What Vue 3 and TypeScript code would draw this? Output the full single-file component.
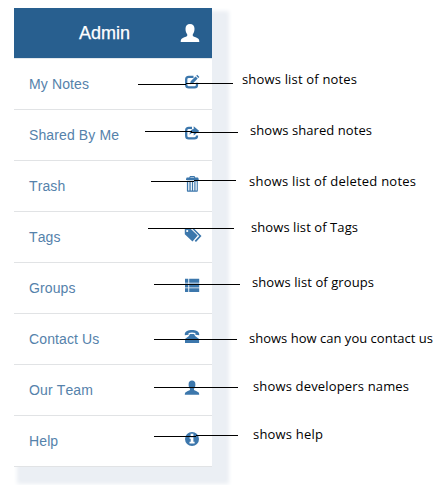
<script setup lang="ts">
type IconName = 'edit' | 'share' | 'trash' | 'tags' | 'list' | 'phone' | 'user' | 'info'

interface MenuItem {
  label: string
  icon: IconName
}

interface Callout {
  text: string
  x: number
  y: number
  width: number
  line: string
}

const items: MenuItem[] = [
  { label: 'My Notes', icon: 'edit' },
  { label: 'Shared By Me', icon: 'share' },
  { label: 'Trash', icon: 'trash' },
  { label: 'Tags', icon: 'tags' },
  { label: 'Groups', icon: 'list' },
  { label: 'Contact Us', icon: 'phone' },
  { label: 'Our Team', icon: 'user' },
  { label: 'Help', icon: 'info' },
]

const callouts: Callout[] = [
  { text: 'shows list of notes', x: 242, y: 84, width: 115, line: 'M138 84h48v-1h47v1h-47v1h-48z' },
  { text: 'shows shared notes', x: 250, y: 135, width: 122, line: 'M145 131h47v1h46v1h-47v-1h-46z' },
  { text: 'shows list of deleted notes', x: 249, y: 186, width: 167, line: 'M151 181h43v-1h42v1h-42v1h-43z' },
  { text: 'shows list of Tags', x: 251, y: 232, width: 107, line: 'M148 228h86v1h-86z' },
  { text: 'shows list of groups', x: 252, y: 287, width: 122, line: 'M154 284h86v1h-86z' },
  { text: 'shows how can you contact us', x: 249, y: 343, width: 184, line: 'M154 339h83v1h-83z' },
  { text: 'shows developers names', x: 253, y: 391, width: 156, line: 'M154 387h84v1h-84z' },
  { text: 'shows help', x: 253, y: 439, width: 70, line: 'M154 436h42v-1h42v1h-42v1h-42z' },
]
</script>

<template>
  <main class="page">
    <nav class="panel">
      <header class="head">
        <span class="title">Admin</span>
        <svg class="avatar" viewBox="0 0 20 19">
          <path d="M5.500 4.800C5.500 1.600 7.200 0 10 0s4.500 1.600 4.500 4.800c0 2.500-.7 4.300-1.700 5.500v1.800c1.400.9 4.400 1.600 5.500 2.700.7.700 1 1.500 1 3.200H.700c0-1.700.3-2.500 1-3.200 1.100-1.100 4.100-1.800 5.500-2.700v-1.800C6.200 9.100 5.500 7.300 5.500 4.800z" />
        </svg>
      </header>
      <a v-for="item in items" :key="item.label" class="row">
        <span>{{ item.label }}</span>
        <svg class="icon" viewBox="0 0 16 16">
          <g v-if="item.icon === 'edit'">
            <path class="stroke" d="M9.500 2.800H4.800Q2.200 2.800 2.200 5.300v5.400Q2.200 13.400 4.800 13.400h5.700Q13 13.400 13 11V8.800" />
            <path d="M6 10.200 6.700 7.200 11.500 2.400l2.200 2.200L8.900 9.400zM12.200 1.800l1-1 2.200 2.100-1.100 1.200z" />
          </g>
          <g v-else-if="item.icon === 'share'">
            <path class="stroke" d="M8 2.800H4.800Q2.200 2.800 2.200 5.300v5.400Q2.200 13.400 4.800 13.400h5.500Q13 13.400 13 11v-.6" />
            <path d="M9.700 1.300 15.300 5.900l-5.600 4.500V7.900Q7.300 7.600 5.500 9.800 5.700 4.600 9.700 4z" />
          </g>
          <g v-else-if="item.icon === 'trash'">
            <path d="M6 0h4.500l.8 1.500H14l.7 1.500v1H2V3l.7-1.500h2.500zM6.500.9l-.3.600h4L9.900.9z" />
            <path fill-rule="evenodd" d="M2.900 4.700h10.900V15Q13.800 15.800 13 15.800H3.700Q2.900 15.800 2.900 15zM4.200 5.600v9h1.200v-9zM6.700 5.600v9h1.200v-9zM9.100 5.600v9h1.200v-9zM11.500 5.600v9h1.200v-9z" />
          </g>
          <g v-else-if="item.icon === 'tags'">
            <path fill-rule="evenodd" d="M.8 1.300h5.300l7.600 7.300-5.200 6L.8 7.300zM3.200 2.900a1.100 1.100 0 1 0 0 2.200A1.100 1.100 0 0 0 3.200 2.900z" />
            <path d="M8 1.500h2l7.500 7.500-5.500 6-1.300-1.200 4.500-4.700z" />
          </g>
          <g v-else-if="item.icon === 'list'">
            <path d="M1 .8h3.300v3.900H1zM5.200.8H15.200v3.900h-10zM1 5.500h3.300v3.900H1zM5.200 5.500h10v3.900h-10zM1 10.200h3.300v3.900H1zM5.200 10.200h10v3.900h-10z" />
          </g>
          <g v-else-if="item.icon === 'phone'">
            <path d="M.8 5C1.100 2.300 4.300 1 8 1s6.900 1.300 7.200 4v1.300l-3.800-.5V4C9.600 3.200 6.400 3.200 4.600 4v1.800L.8 6.300zM5.900 4.900h4.200l1 2 4 3.100v4H1v-4l3.900-3.100z" />
          </g>
          <g v-else-if="item.icon === 'user'">
            <path d="M4.600 4.300C4.600 1.800 5.900.600 8 .600s3.400 1.200 3.400 3.700c0 2-.5 3.600-1.400 4.500v1.200c1 .8 3.400 1.300 4.400 2.300.6.600.8 1.300.8 2.400H.8c0-1.100.2-1.800.8-2.400 1-1 3.400-1.500 4.400-2.300V8.800c-.9-.9-1.400-2.500-1.400-4.500z" />
          </g>
          <g v-else>
            <circle cx="8" cy="8" r="7" />
            <path class="cut" d="M6.600 2.800h2.800v2.400H6.600zM5.600 6.200h3.800v4.500h1.200v1.700H5.500v-1.700h1.200V7.800H5.600z" />
          </g>
        </svg>
      </a>
    </nav>

    <svg class="callouts" viewBox="0 0 441 485">
      <g v-for="c in callouts" :key="c.text">
        <path :d="c.line" />
        <text :x="c.x" :y="c.y" :textLength="c.width">{{ c.text }}</text>
      </g>
    </svg>
  </main>
</template>

<style>
body {
  background: #fff;
}
</style>

<style scoped>
.page {
  position: relative;
  width: 441px;
  height: 485px;
  padding: 8px 0 0 14px;
  box-sizing: border-box;
  overflow: hidden;
  background: #fff;
}
.panel {
  width: 198px;
  background: #fff;
  box-shadow: 10px 10px 4px 7px #ebeff4;
  font-family: "Liberation Sans", Arial, sans-serif;
  font-kerning: none;
}
.head {
  height: 51px;
  box-sizing: border-box;
  display: flex;
  align-items: center;
  justify-content: space-between;
  padding: 0 12px 0 65px;
  background: #285f8f;
  border-bottom: 1px solid #e3e8ec;
  color: #fff;
}
.title {
  font-size: 18px;
  line-height: 20px;
  -webkit-text-stroke: 0.25px #fff;
}
.avatar {
  width: 20px;
  height: 19px;
  fill: #fff;
}
.row {
  height: 51px;
  box-sizing: border-box;
  display: flex;
  align-items: center;
  justify-content: space-between;
  padding: 0 12px 0 15px;
  border-bottom: 1px solid #e1e3e5;
  color: #5582ab;
  font-size: 14px;
  letter-spacing: 0.12px;
}
.icon {
  width: 16px;
  height: 16px;
  margin-bottom: 4px;
  fill: #3c77ac;
  overflow: visible;
}
.stroke {
  fill: none;
  stroke: #3c77ac;
  stroke-width: 2.3;
}
.cut {
  fill: #fff;
}
.callouts {
  position: absolute;
  left: 0;
  top: 0;
  width: 441px;
  height: 485px;
  fill: #000;
  font-family: "Open Sans", "Noto Sans", sans-serif;
  font-size: 13px;
}
</style>
